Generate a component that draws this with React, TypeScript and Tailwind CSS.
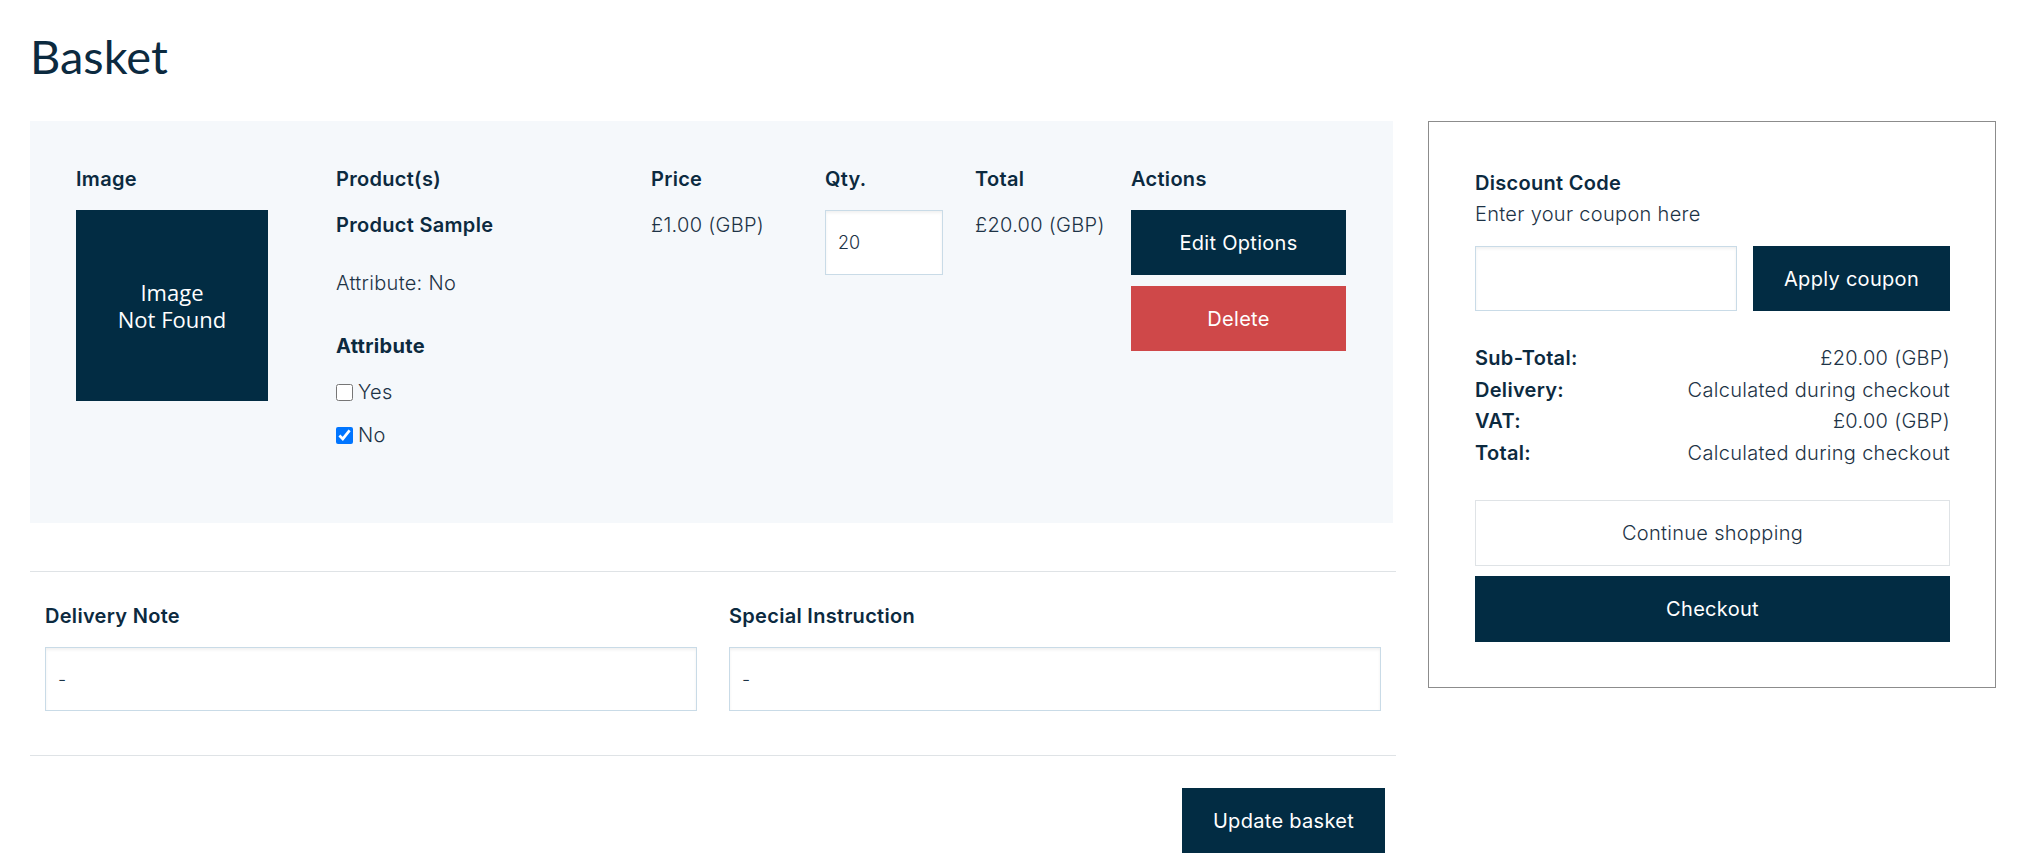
import React from "react";

// ── Bits ───────────────────────────────────────────────────────────────────
function HeadCell({ children }: { children: React.ReactNode }) {
  return <div className="text-[20px] tracking-[0.3px] leading-[28px] font-semibold text-[#0c2a3f]">{children}</div>;
}

function NavyButton({ children, className = "" }: { children: React.ReactNode; className?: string }) {
  return (
    <button
      type="button"
      className={
        "h-[65px] bg-[#022c43] text-white text-[20px] tracking-[0.3px] font-normal flex items-center justify-center cursor-pointer " +
        className
      }
    >
      {children}
    </button>
  );
}

function TotalRow({ label, value }: { label: string; value: string }) {
  return (
    <div className="flex justify-between text-[20px] tracking-[0.3px] leading-[31.5px]">
      <span className="font-semibold text-[#0c2a3f]">{label}</span>
      <span className="font-light text-[#1d3346]">{value}</span>
    </div>
  );
}

const fieldCls =
  "bg-white border border-[#c9dbe7] shadow-[inset_0_2px_3px_rgba(0,0,0,0.06)] pl-[12px] text-[18px] font-light text-[#1d3346] outline-none";

const bodyCls = "text-[20px] tracking-[0.3px] leading-[28px] font-light text-[#1d3346]";

// ── Page ───────────────────────────────────────────────────────────────────
export default function App() {
  return (
    <div className="min-h-screen bg-white font-['Inter',sans-serif] text-[#0c2a3f]">
      <div className="pl-[30px] pr-[21px] pt-[28px]">
        <h1 className="font-['Lato',sans-serif] text-[47px] leading-[56px] font-normal text-[#0c2a3f] mb-[37px]">
          Basket
        </h1>

        <div className="flex items-start gap-[32px]">
          {/* Left: items + notes */}
          <div className="w-[1366px] shrink-0">
            <div className="bg-[#f5f8fb] w-[1363px] pl-[46px] pr-[47px] pt-[44px] pb-[74px]">
              <div className="grid grid-cols-[260px_315px_174px_150px_156px_215px]">
                <HeadCell>Image</HeadCell>
                <HeadCell>Product(s)</HeadCell>
                <HeadCell>Price</HeadCell>
                <HeadCell>Qty.</HeadCell>
                <HeadCell>Total</HeadCell>
                <HeadCell>Actions</HeadCell>

                {/* Row */}
                <div className="pt-[17px]">
                  <div className="w-[192px] h-[191px] bg-[#022c43] flex flex-col items-center justify-center text-center text-white font-['Open_Sans',sans-serif] text-[22px] leading-[27px]">
                    <span>Image</span>
                    <span>Not Found</span>
                  </div>
                </div>

                <div className="pt-[18px]">
                  <div className="text-[20px] tracking-[0.3px] leading-[28px] font-semibold">Product Sample</div>
                  <div className={"mt-[30px] " + bodyCls}>Attribute: No</div>
                  <div className="mt-[35px] text-[20px] tracking-[0.3px] leading-[28px] font-bold">Attribute</div>
                  <label className={"mt-[18px] flex items-center gap-[5px] " + bodyCls}>
                    <input type="checkbox" className="w-[17px] h-[17px] m-0" />
                    Yes
                  </label>
                  <label className={"mt-[15px] flex items-center gap-[5px] " + bodyCls}>
                    <input type="checkbox" defaultChecked className="w-[17px] h-[17px] m-0" />
                    No
                  </label>
                </div>

                <div className={"pt-[18px] " + bodyCls}>£1.00 (GBP)</div>

                <div className="pt-[17px]">
                  <input type="text" defaultValue="20" className={"w-[118px] h-[65px] " + fieldCls} />
                </div>

                <div className={"pt-[18px] " + bodyCls}>£20.00 (GBP)</div>

                <div className="pt-[17px] flex flex-col gap-[11px]">
                  <NavyButton className="w-[215px]">Edit Options</NavyButton>
                  <button
                    type="button"
                    className="w-[215px] h-[65px] bg-[#cf4849] text-white text-[20px] tracking-[0.3px] flex items-center justify-center cursor-pointer"
                  >
                    Delete
                  </button>
                </div>
              </div>
            </div>

            {/* Notes */}
            <div className="mt-[48px] border-t border-[#dfe3e6] pt-[30px] pb-[44px] px-[15px]">
              <div className="grid grid-cols-2 gap-x-[32px]">
                <div>
                  <div className="text-[20px] tracking-[0.3px] leading-[28px] font-semibold">Delivery Note</div>
                  <input type="text" defaultValue="-" className={"mt-[17px] w-full h-[64px] " + fieldCls} />
                </div>
                <div>
                  <div className="text-[20px] tracking-[0.3px] leading-[28px] font-semibold">Special Instruction</div>
                  <input type="text" defaultValue="-" className={"mt-[17px] w-full h-[64px] " + fieldCls} />
                </div>
              </div>
            </div>

            <div className="border-t border-[#dfe3e6] pt-[32px] pr-[11px] flex justify-end">
              <NavyButton className="w-[203px]">Update basket</NavyButton>
            </div>
          </div>

          {/* Right: summary */}
          <aside className="flex-1 border border-[#8c8c8c] pl-[46px] pr-[45px] pt-[46px] pb-[45px]">
            <div className="text-[20px] tracking-[0.3px] leading-[31px] font-semibold">Discount Code</div>
            <div className="text-[20px] tracking-[0.3px] leading-[31px] font-light text-[#1d3346]">Enter your coupon here</div>

            <div className="mt-[16px] flex gap-[16px]">
              <input type="text" className={"w-[262px] h-[65px] " + fieldCls} />
              <NavyButton className="flex-1">Apply coupon</NavyButton>
            </div>

            <div className="mt-[32px]">
              <TotalRow label="Sub-Total:" value="£20.00 (GBP)" />
              <TotalRow label="Delivery:" value="Calculated during checkout" />
              <TotalRow label="VAT:" value="£0.00 (GBP)" />
              <TotalRow label="Total:" value="Calculated during checkout" />
            </div>

            <button
              type="button"
              className="mt-[31px] w-full h-[66px] bg-white border border-[#dfe3e6] text-[20px] tracking-[0.3px] font-light text-[#1d3346] cursor-pointer"
            >
              Continue shopping
            </button>
            <NavyButton className="mt-[10px] w-full h-[66px]">Checkout</NavyButton>
          </aside>
        </div>
      </div>
    </div>
  );
}
